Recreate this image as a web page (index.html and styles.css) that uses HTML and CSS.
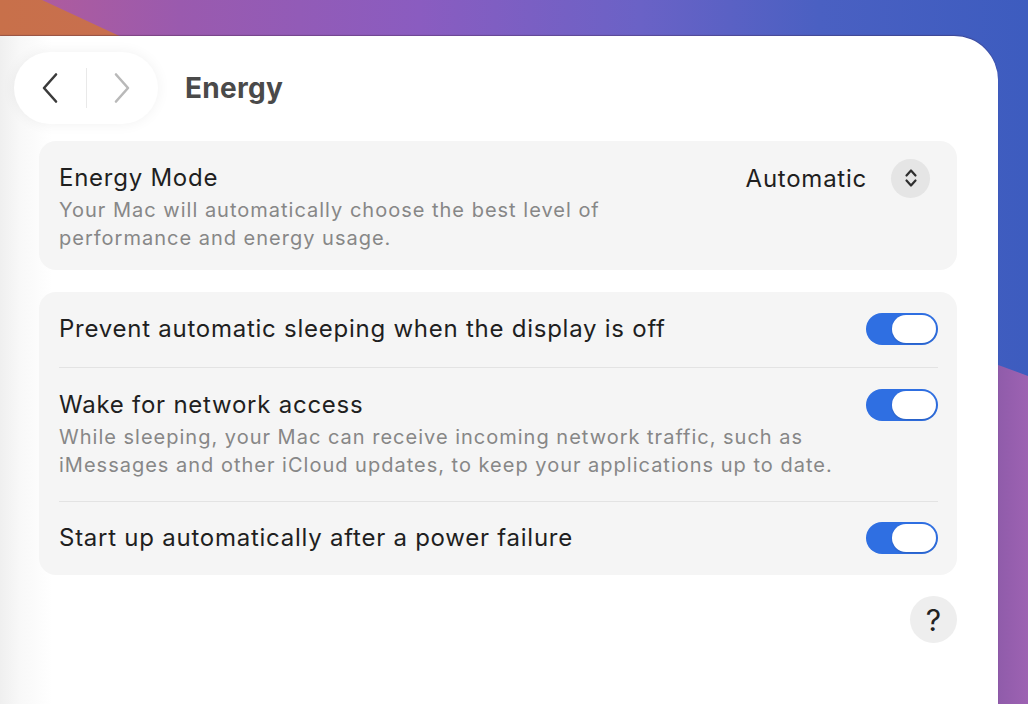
FILE: index.html
```html
<!DOCTYPE html>
<html lang="en">
<head>
<meta charset="utf-8">
<title>Energy</title>
<link rel="stylesheet" href="styles.css">
</head>
<body>
<div class="desktop">
  <div class="window">
    <header class="toolbar">
      <div class="nav-pill">
        <button class="nav-btn back" aria-label="Back">
          <svg width="18" height="32" viewBox="0 0 18 32"><path d="M15 2.5 L3 16 L15 29.5" fill="none" stroke="#3b3b3b" stroke-width="2.6" stroke-linecap="round" stroke-linejoin="round"/></svg>
        </button>
        <span class="nav-divider"></span>
        <button class="nav-btn fwd" aria-label="Forward">
          <svg width="18" height="32" viewBox="0 0 18 32"><path d="M3 2.5 L15 16 L3 29.5" fill="none" stroke="#b9b9b9" stroke-width="2.6" stroke-linecap="round" stroke-linejoin="round"/></svg>
        </button>
      </div>
      <h1 class="title">Energy</h1>
    </header>

    <main class="content">
      <section class="card">
        <div class="row row-mode">
          <div class="text">
            <div class="label">Energy Mode</div>
            <div class="desc">Your Mac will automatically choose the best level of<br>performance and energy usage.</div>
          </div>
          <div class="popup">
            <span class="popup-value">Automatic</span>
            <span class="stepper">
              <svg width="14" height="20" viewBox="0 0 14 20"><path d="M2.5 7.5 L7 2.5 L11.5 7.5 M2.5 12.5 L7 17.5 L11.5 12.5" fill="none" stroke="#2e2e2e" stroke-width="2.2" stroke-linecap="round" stroke-linejoin="round"/></svg>
            </span>
          </div>
        </div>
      </section>

      <section class="card">
        <div class="row">
          <div class="text">
            <div class="label">Prevent automatic sleeping when the display is off</div>
          </div>
          <span class="toggle on"><span class="knob"></span></span>
        </div>
        <div class="sep"></div>
        <div class="row">
          <div class="text">
            <div class="label">Wake for network access</div>
            <div class="desc">While sleeping, your Mac can receive incoming network traffic, such as<br>iMessages and other iCloud updates, to keep your applications up to date.</div>
          </div>
          <span class="toggle on"><span class="knob"></span></span>
        </div>
        <div class="sep"></div>
        <div class="row row-last">
          <div class="text">
            <div class="label">Start up automatically after a power failure</div>
          </div>
          <span class="toggle on"><span class="knob"></span></span>
        </div>
      </section>

      <div class="help-row">
        <button class="help" aria-label="Help">?</button>
      </div>
    </main>
  </div>
</div>
</body>
</html>
```

FILE: styles.css
```css
* { box-sizing: border-box; }

html, body {
  margin: 0;
  padding: 0;
  width: 1028px;
  height: 704px;
  overflow: hidden;
}

body {
  font-family: "Inter", "Noto Sans", "Liberation Sans", sans-serif;
  color: #1f1f1f;
}

.desktop {
  position: relative;
  width: 1028px;
  height: 704px;
  background: linear-gradient(90deg, #b45c98 0px, #9a5aae 180px, #8a5cc0 420px, #6a62c6 640px, #4a60c2 820px, #3d5cbf 1028px);
  display: flex;
  flex-direction: column;
}

.desktop::before {
  content: "";
  position: absolute;
  left: 0;
  top: 0;
  width: 220px;
  height: 40px;
  background: linear-gradient(90deg, #c8704a, #c86e52);
  clip-path: polygon(0 0, 42px 0, 128px 40px, 0 40px);
}

.desktop::after {
  content: "";
  position: absolute;
  left: 990px;
  top: 0;
  width: 38px;
  height: 704px;
  background: linear-gradient(90deg, #8c5aa8, #9d62b2);
  clip-path: polygon(0 362px, 38px 376px, 38px 704px, 0 704px);
}

.window {
  position: relative;
  z-index: 1;
  margin-top: 36px;
  width: 998px;
  flex: 1;
  border-top-right-radius: 44px;
  background: linear-gradient(90deg, #efefef 0px, #f8f8f8 20px, #ffffff 52px);
  box-shadow: 0 -1px 1px rgba(60, 30, 60, 0.35);
  display: flex;
  flex-direction: column;
}

.toolbar {
  display: flex;
  align-items: center;
  gap: 27px;
  padding: 16px 0 0 14px;
}

.nav-pill {
  width: 144px;
  height: 72px;
  border-radius: 36px;
  background: #ffffff;
  box-shadow: 0 0 14px rgba(0, 0, 0, 0.06);
  display: flex;
  align-items: center;
}

.nav-btn {
  flex: 1;
  height: 100%;
  border: 0;
  background: transparent;
  padding: 0;
  display: flex;
  align-items: center;
  justify-content: center;
}

.nav-divider {
  width: 1px;
  height: 40px;
  background: #e9e9e9;
}

.title {
  margin: 0;
  font-size: 28px;
  font-weight: 700;
  color: #4a4a4a;
  letter-spacing: 0.3px;
}

.content {
  margin: 17px 0 0 39px;
  width: 918px;
  display: flex;
  flex-direction: column;
  gap: 22px;
}

.card {
  background: #f5f5f5;
  border-radius: 17px;
  padding: 0 19px 0 20px;
}

.row {
  display: flex;
  align-items: flex-start;
  justify-content: space-between;
  padding: 22px 0;
}

.row-mode {
  padding: 22px 0 18px;
}

.row-last {
  padding: 21px 0;
}

.label {
  font-size: 24px;
  line-height: 30px;
  letter-spacing: 0.75px;
  color: #1f1f1f;
}

.desc {
  margin-top: 3px;
  font-size: 20px;
  line-height: 28px;
  letter-spacing: 1px;
  color: #878787;
}

.popup {
  display: flex;
  align-items: center;
  gap: 24px;
  margin-right: 8px;
  height: 30px;
}

.popup-value {
  font-size: 24px;
  letter-spacing: 0.75px;
  color: #1f1f1f;
}

.stepper {
  width: 39px;
  height: 39px;
  border-radius: 50%;
  background: #e5e5e5;
  display: flex;
  align-items: center;
  justify-content: center;
}

.toggle {
  flex: none;
  width: 72px;
  height: 32px;
  border-radius: 16px;
  background: #2f6fe2;
  margin-top: -1px;
  display: flex;
  align-items: center;
  justify-content: flex-end;
  padding-right: 2px;
}

.knob {
  width: 44px;
  height: 28px;
  border-radius: 14px;
  background: #ffffff;
  box-shadow: 0 1px 2px rgba(0, 0, 0, 0.15);
}

.sep {
  height: 1px;
  background: #e3e3e3;
}

.help-row {
  display: flex;
  justify-content: flex-end;
  margin-top: -1px;
}

.help {
  width: 47px;
  height: 47px;
  border-radius: 50%;
  border: 0;
  background: #eeeeee;
  font-family: "Inter", "Noto Sans", sans-serif;
  font-size: 30px;
  color: #222222;
  padding: 0;
  display: flex;
  align-items: center;
  justify-content: center;
}
```
